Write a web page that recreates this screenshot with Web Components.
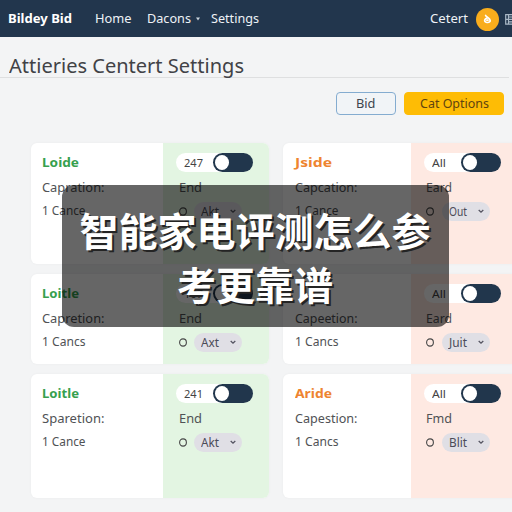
<!DOCTYPE html>
<html lang="zh">
<head>
<meta charset="utf-8">
<title>Attieries Centert Settings</title>
<style>
html,body{margin:0;width:512px;height:512px;overflow:hidden}
body{font-family:"Noto Sans","Noto Sans CJK SC",sans-serif;background:#f3f4f5}
</style>
</head>
<body>
<settings-page></settings-page>
<script>
const define = (name, html, setup) => customElements.define(name, class extends HTMLElement {
  connectedCallback() {
    if (this.shadowRoot) return;
    const t = document.createElement('template');
    t.innerHTML = html;
    this.attachShadow({ mode: 'open' }).append(t.content.cloneNode(true));
    if (setup) setup(this, this.shadowRoot);
  }
});

/* Label whose letters are widened or narrowed to fill the given width. */
define('fit-label', `<style>
:host{display:inline-block;white-space:nowrap;flex:none}
span{display:inline-block;transform-origin:0 50%}
</style><span><slot></slot></span>`, (el, root) => {
  const target = +el.getAttribute('w');
  const span = root.querySelector('span');
  const now = span.getBoundingClientRect().width;
  span.style.transform = `scaleX(${(target / now).toFixed(4)})`;
  el.style.width = target + 'px';
});

define('user-badge', `<style>
:host{display:flex;width:23px;height:23px;border-radius:50%;background:#f9ad1c;align-items:center;justify-content:center;flex:none}
</style><svg width="9" height="10" viewBox="0 0 9 10" fill="none" stroke="#fff" stroke-width="1.7" stroke-linecap="round"><path d="M2.6 1.5C3.2 3 5.6 3.3 6.6 5.2M4.3 4C1.4 4.2.8 7.6 3.2 8.3C6 9 8.2 7.6 6.6 5.2M3.9 6.2h1"/></svg>`);

define('top-bar', `<style>
:host{display:flex;align-items:center;box-sizing:border-box;height:37px;padding:1px 0 0 8px;background:#22364d;color:#eef2f6;font-size:12px;line-height:20px;overflow:hidden}
.brand{font-weight:700;color:#fff;margin-right:23px}
.home{margin-right:15px}.dec{margin-right:5px}.car{margin-right:11px}
.user{margin-left:auto;margin-right:8px}
user-badge{margin-right:6px}
svg{flex:none}
</style>
<fit-label class="brand" w="64">Bildey Bid</fit-label>
<fit-label class="home" w="36.5">Home</fit-label>
<fit-label class="dec" w="44">Dacons</fit-label>
<svg class="car" width="4" height="4" viewBox="0 0 4 4"><path d="M0 .5h4L2 3.5z" fill="#ccd5de"/></svg>
<fit-label w="48">Settings</fit-label>
<fit-label class="user" w="38">Cetert</fit-label>
<user-badge></user-badge>
<svg width="7" height="11" viewBox="0 0 7 11" fill="none" stroke="#a9b8c6" stroke-width="1.2"><path d="M7 .7H.7v9.4H7M.7 5.4H7M3.5 3h3.5M3.5 7.8H7M3.5 1v9"/></svg>`);

define('action-button', `<style>
:host{display:flex;box-sizing:border-box;height:23px;border-radius:4px;align-items:center;justify-content:center;font-size:12px;line-height:20px;color:#3d454e;width:60px;background:#f1f4f7;border:1px solid #84acd0}
:host([primary]){width:100px;background:#febc05;border-color:#febc05;color:#604410}
</style><slot></slot>`);

define('toggle-switch', `<style>
:host{display:flex;align-items:center;box-sizing:border-box;width:77px;height:19px;border-radius:10px 0 0 10px;font-size:11px;line-height:19px;color:#444;background:linear-gradient(90deg,#fff 0 50px,transparent 50px);padding-left:8px;justify-content:space-between}
.track{box-sizing:border-box;width:40px;height:19px;border-radius:10px;background:#21364c;padding:2px}
.knob{width:14px;height:15px;border-radius:50%;background:#fff}
</style><slot></slot><div class="track"><div class="knob"></div></div>`);

define('pill-select', `<style>
:host{display:flex;align-items:center;box-sizing:border-box;width:48px;height:19px;border-radius:10px;background:#e0dfe5;color:#4b4b58;padding:0 6px 0 7px;justify-content:space-between;font-size:12px;line-height:19px}
</style><slot></slot><svg width="6" height="5" viewBox="0 0 6 5"><path d="M.7 1l2.3 2.2L5.3 1" fill="none" stroke="#555562" stroke-width="1.3"/></svg>`);

define('offer-card', `<style>
:host{display:grid;grid-template-columns:132px 106px;border-radius:6px;overflow:hidden;background:#fff;color:#505255;font-size:12px;line-height:20px;--accent:#36a04e;--tint:#e3f5e2;box-shadow:0 0 3px #0000000a}
:host([tone=orange]){grid-template-columns:128px 110px;--accent:#ee8430;--tint:#fee9e2}
.main,.side{display:grid;grid-template-rows:23px 20px 20px;row-gap:3px;padding-top:9px;align-content:start}
.main{padding-left:11.5px}
.side{background:var(--tint);padding-left:13px}
.title{font-weight:700;color:var(--accent);font-size:13px}
.row{display:flex;align-items:center;gap:7.5px;padding-left:3px}
.switch{display:flex;align-items:flex-start;padding-top:.5px}
.end{padding-left:3px}
:host([tone=orange]) .row,:host([tone=orange]) .end{padding-left:2px}
svg{flex:none}
</style>
<div class="main"><div class="title"><slot name="title"></slot></div><div><slot name="caption"></slot></div><div><slot name="count"></slot></div></div>
<div class="side"><div class="switch"><toggle-switch><slot name="value"></slot></toggle-switch></div><div class="end"><slot name="end"></slot></div><div class="row"><svg width="8" height="9" viewBox="0 0 8 9"><ellipse cx="4" cy="4.5" rx="3.4" ry="3.6" fill="none" stroke="#484848" stroke-width="1.1"/></svg><pill-select><slot name="option"></slot></pill-select></div></div>`);

define('caption-overlay', `<style>
:host{position:absolute;left:62px;top:185px;width:387px;height:142px;box-sizing:border-box;border-radius:12px;background:rgba(0,0,0,.6);color:#fff;font:700 39px/54px "Noto Sans CJK SC",sans-serif;text-align:center;padding:17px 1px 0 0;text-shadow:2px 2px 0 #242424;white-space:nowrap}
</style><slot></slot>`);

const card = (tone, title, caption, count, value, vw, end, ew, option) => `
<offer-card tone="${tone}"><fit-label slot="title" w="37">${title}</fit-label><fit-label slot="caption" w="62.5">${caption}</fit-label><fit-label slot="count" w="43.5">${count}</fit-label><fit-label slot="value" w="${vw}">${value}</fit-label><fit-label slot="end" w="${ew}">${end}</fit-label><fit-label slot="option" w="18">${option}</fit-label></offer-card>`;

define('settings-page', `<style>
:host{display:block;position:relative;width:512px;height:512px;overflow:hidden;background:#f3f4f5}
h1{margin:0 3px 0 0;box-sizing:border-box;height:41px;padding:14px 0 0 9px;border-bottom:1px solid #dedfe0;font-size:19.5px;line-height:30px;font-weight:400;color:#414246}
.actions{display:flex;justify-content:flex-end;gap:8px;padding:14px 8px 0 0}
.grid{display:grid;grid-template-columns:238px 238px;grid-template-rows:121px 90px 124px;column-gap:14.5px;row-gap:10px;padding:28px 0 0 30.5px}
</style>
<top-bar></top-bar>
<h1><fit-label w="235">Attieries Centert Settings</fit-label></h1>
<div class="actions"><action-button><fit-label w="19.5">Bid</fit-label></action-button><action-button primary><fit-label w="69">Cat Options</fit-label></action-button></div>
<div class="grid">
${card('green','Loide','Capration:','1 Cance','247',19,'End',23,'Akt')}
${card('orange','Jside','Capcation:','1 Cance','All',14,'Eard',26,'Out')}
${card('green','Loitle','Capretion:','1 Cancs','107',19,'End',23,'Axt')}
${card('orange','','Capeetion:','1 Cancs','All',14,'Eard',26,'Juit').replace('<fit-label slot="title" w="37"></fit-label>','')}
${card('green','Loitle','Sparetion:','1 Cance','241',19,'End',23,'Akt')}
${card('orange','Aride','Capestion:','1 Cancs','All',14,'Fmd',26,'Blit')}
</div>
<caption-overlay>智能家电评测怎么参<br>考更靠谱</caption-overlay>`);
</script>
</body>
</html>
